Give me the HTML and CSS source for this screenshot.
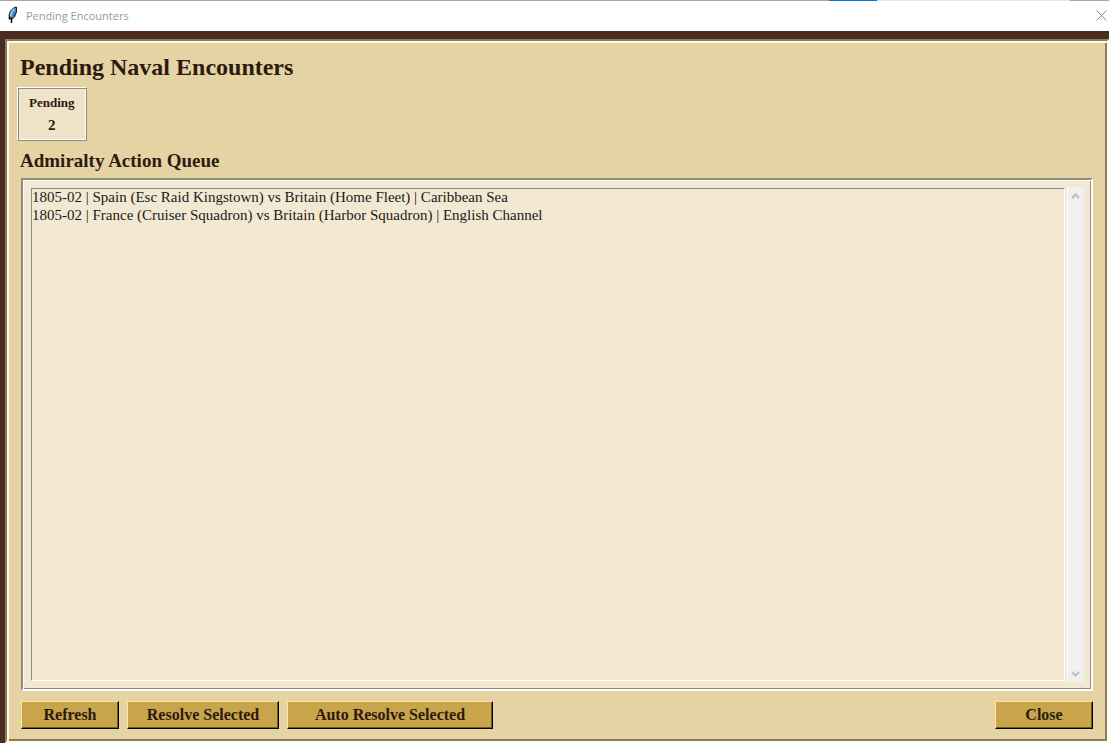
FILE: index.html
```html
<!DOCTYPE html>
<html lang="en">
<head>
    <meta charset="UTF-8">
    <meta name="viewport" content="width=device-width, initial-scale=1.0">
    <title>Pending Encounters</title>
    <link rel="stylesheet" href="styles.css">
</head>
<body>
    <div class="top-edge"><span class="accent"></span><span class="pale"></span><span class="end"></span></div>
    <header class="titlebar">
        <svg class="feather" width="10" height="18" viewBox="0 0 10 18">
            <path d="M1.500 12 1 9 2.500 5 6 1.500 8.500 1 8.500 6 6.500 11 3.500 13.500Z" fill="#4c8bd6" stroke="#222" stroke-width="1"/>
            <path d="M6 3 3.500 6.500 2.500 10.500" fill="none" stroke="#a9cbee" stroke-width="1.500"/>
            <path d="M7.500 6 5 10.500" fill="none" stroke="#27558f" stroke-width="1"/>
            <path d="M3.500 11.500V17M1.500 10.500v3" fill="none" stroke="#000" stroke-width="1.500"/>
        </svg>
        <span class="window-title">Pending Encounters</span>
        <button type="button" class="window-close" aria-label="Close window">
            <svg width="11" height="11" viewBox="0 0 11 11">
                <path d="M.5 .5 10.500 10.500M10.500 .5 .5 10.500" stroke="#8c8c8c"/>
            </svg>
        </button>
    </header>
    <main class="desk">
        <section class="panel">
            <h1>Pending Naval Encounters</h1>
            <div class="stat">
                <span class="stat-label">Pending</span>
                <span class="stat-value">2</span>
            </div>
            <h2><label for="queue">Admiralty Action Queue</label></h2>
            <div class="queue-frame">
                <select id="queue" class="queue" size="10">
                    <option>1805-02 | Spain (Esc Raid Kingstown) vs Britain (Home Fleet) | Caribbean Sea</option>
                    <option>1805-02 | France (Cruiser Squadron) vs Britain (Harbor Squadron) | English Channel</option>
                </select>
                <div class="scrollbar">
                    <button type="button" aria-label="Scroll up">
                        <svg width="9" height="6" viewBox="0 0 9 6"><path d="M1 5 4.500 1.500 8 5" fill="none" stroke="#bdbdbd" stroke-width="2"/></svg>
                    </button>
                    <button type="button" aria-label="Scroll down">
                        <svg width="9" height="6" viewBox="0 0 9 6"><path d="M1 1 4.500 4.500 8 1" fill="none" stroke="#bdbdbd" stroke-width="2"/></svg>
                    </button>
                </div>
            </div>
            <div class="actions">
                <button type="button" class="btn">Refresh</button>
                <button type="button" class="btn btn-resolve">Resolve Selected</button>
                <button type="button" class="btn btn-auto">Auto Resolve Selected</button>
                <button type="button" class="btn btn-close">Close</button>
            </div>
        </section>
    </main>
</body>
</html>
```
FILE: styles.css
```css
* {
    box-sizing: border-box;
}
body {
    margin: 0;
    height: 100vh;
    display: flex;
    flex-direction: column;
    background-color: #4a2c20;
    color: #2b1b0e;
    font-family: "Liberation Serif", "Times New Roman", serif;
}
button {
    margin: 0;
    padding: 0;
    border: none;
    background: none;
    font-family: inherit;
    cursor: pointer;
}
svg {
    display: block;
}

/* window chrome */
.top-edge {
    display: flex;
    justify-content: flex-end;
    height: 1px;
    background-color: #a6a6a6;
}
.accent {
    width: 48px;
    background-color: #0078d7;
}
.pale {
    width: 193px;
    background-color: #e5e5e5;
}
.end {
    width: 39px;
}
.titlebar {
    display: flex;
    align-items: center;
    height: 30px;
    padding: 0 2px 2px 8px;
    background-color: #fff;
}
.window-title {
    margin-left: 8px;
    color: #999;
    font-family: "Open Sans", sans-serif;
    font-size: 11px;
}
.window-close {
    margin-left: auto;
}

/* main panel */
.desk {
    flex: 1;
    display: flex;
    min-height: 0;
    padding: 8px 0 0 5px;
}
.panel {
    flex: 1;
    display: flex;
    flex-direction: column;
    padding: 12px 14px;
    background-color: #e6d3a3;
    border: 2px solid;
    border-color: #8a7e62 #ffffe1 #ffffe1 #8a7e62;
    box-shadow: inset 2px 2px #ffffe1, inset -2px -2px #8a7e62;
}
h1, h2 {
    margin: 0 0 0 -1px;
}
h1 {
    font-size: 24px;
    line-height: 28px;
}
h2 {
    margin-top: 8px;
    margin-bottom: 5px;
    font-size: 19px;
    line-height: 24px;
}
.stat {
    align-self: flex-start;
    display: flex;
    flex-direction: column;
    align-items: center;
    margin: 6px 0 0 -4px;
    padding: 4px 11px 3px;
    border: 1px solid;
    border-color: #fff #8c8c84 #8c8c84 #fff;
    box-shadow: inset 1px 1px #8c8c84, inset -1px -1px #fff;
    background-color: #efe3c8;
    font-weight: bold;
}
.stat-label {
    font-size: 13px;
    line-height: 21px;
}
.stat-value {
    font-size: 15px;
    line-height: 24px;
}

/* queue list */
.queue-frame {
    flex: 1;
    display: flex;
    gap: 2px;
    min-height: 0;
    padding: 7px 7px 7px 8px;
    border: 2px solid;
    border-color: #8f8b7e #fff #fff #8f8b7e;
    box-shadow: inset 1px 1px #fff, inset -1px -1px #8f8b7e;
    background-color: #f3e9d2;
}
.queue {
    flex: 1;
    min-width: 0;
    margin: 1px 0;
    padding: 0;
    border: 1px solid;
    border-color: #8c8c84 #fff #fff #8c8c84;
    border-radius: 0;
    outline: none;
    overflow: hidden;
    background-color: #f3e9d2;
    color: #1a1a1a;
    font-family: inherit;
    font-size: 15px;
}
.queue option {
    min-height: 18px;
    padding: 0;
    line-height: 18px;
}
.scrollbar {
    display: flex;
    flex-direction: column;
    justify-content: space-between;
    width: 17px;
    padding-right: 1px;
    border-left: 1px solid #fff;
    background-color: #f0f0f0;
}
.scrollbar button {
    display: flex;
    align-items: center;
    justify-content: center;
    height: 17px;
}

/* bottom buttons */
.actions {
    display: flex;
    gap: 8px;
    margin-top: 10px;
}
.btn {
    width: 98px;
    height: 28px;
    border: 1px solid;
    border-color: #ffe2a0 #000 #000 #ffe2a0;
    box-shadow: inset -1px -1px #6f5a28;
    background-color: #c8a54b;
    color: #2b1b0e;
    font-size: 16px;
    font-weight: bold;
}
.btn-resolve {
    width: 152px;
}
.btn-auto {
    width: 206px;
}
.btn-close {
    margin-left: auto;
}
```
